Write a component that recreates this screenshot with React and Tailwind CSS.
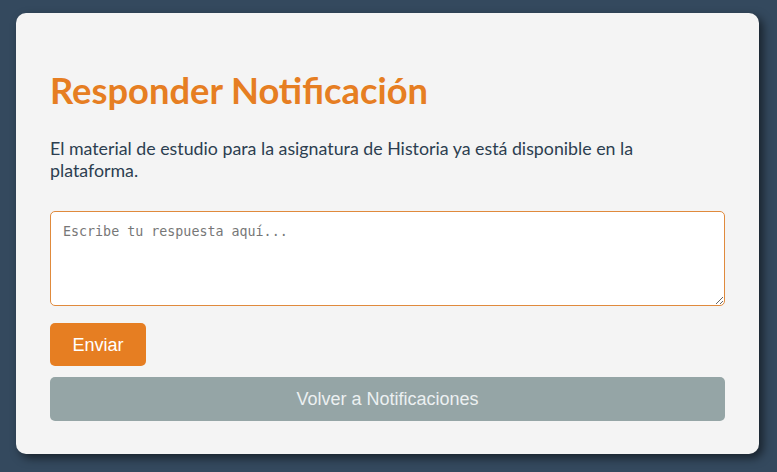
export default function App() {
  return (
    <div className="w-full h-[472px] bg-[#34495e] pt-[13px] pl-[16px] overflow-hidden">
      <div
        className="w-[743px] h-[441px] bg-[#f4f4f4] rounded-[10px] shadow-[4px_4px_10px_rgba(0,0,0,0.55)] px-[34px] pt-[34px] flex flex-col"
        style={{ fontFamily: "Lato, 'Open Sans', sans-serif" }}
      >
        <h1 className="mt-[22px] text-[36.3px] leading-[43px] font-bold text-[#e67e22]">
          Responder Notificación
        </h1>
        <p className="mt-[25px] text-[17.8px] leading-[22px] text-[#2c3e50]">
          El material de estudio para la asignatura de Historia ya está disponible en la plataforma.
        </p>
        <textarea
          className="mt-[30px] w-full h-[95px] shrink-0 bg-white border border-[#e08a3c] rounded-[5px] p-[12px] text-[13.33px] leading-[16px] text-[#333] placeholder:text-[#777] outline-none"
          style={{ fontFamily: "'DejaVu Sans Mono', monospace" }}
          placeholder="Escribe tu respuesta aquí..."
        />
        <div className="mt-[17px]">
          <button
            className="h-[43px] w-[96px] bg-[#e67e22] text-white rounded-[5px] text-[18px] leading-[20px]"
            style={{ fontFamily: "'Liberation Sans', Arial, sans-serif" }}
          >
            Enviar
          </button>
        </div>
        <button
          className="mt-[11px] w-full h-[44px] shrink-0 bg-[#95a5a6] text-[#ecf0f1] rounded-[5px] text-[18px] leading-[20px]"
          style={{ fontFamily: "'Liberation Sans', Arial, sans-serif" }}
        >
          Volver a Notificaciones
        </button>
      </div>
    </div>
  );
}
